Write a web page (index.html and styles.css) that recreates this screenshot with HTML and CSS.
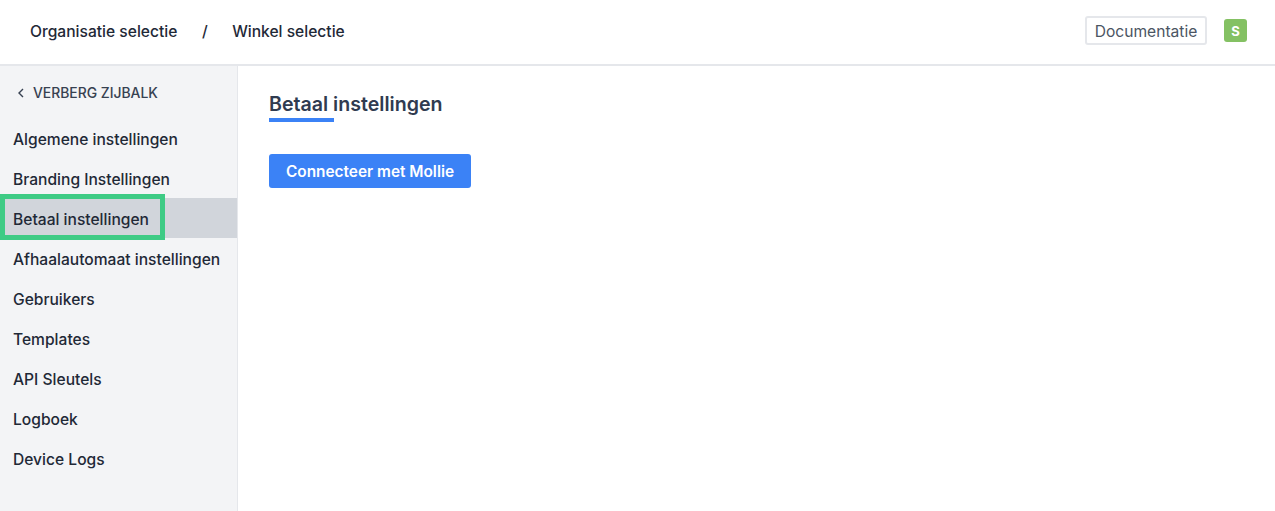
FILE: index.html
```html
<!DOCTYPE html>
<html lang="nl">
<head>
    <meta charset="UTF-8">
    <title>Betaal instellingen</title>
    <link rel="stylesheet" href="styles.css">
</head>
<body>
    <header class="topbar">
        <nav class="crumbs">
            <span>Organisatie selectie</span>
            <span class="crumb-sep">/</span>
            <span>Winkel selectie</span>
        </nav>
        <div class="top-actions">
            <button class="doc-btn">Documentatie</button>
            <span class="avatar">S</span>
        </div>
    </header>
    <div class="main">
        <aside class="sidebar">
            <div class="hide-sidebar">
                <svg width="8" height="10" viewBox="0 0 8 10" fill="none" stroke="#374151" stroke-width="1.4"><path d="M6 1 2 5l4 4"/></svg>
                <span>VERBERG ZIJBALK</span>
            </div>
            <ul class="menu">
                <li>Algemene instellingen</li>
                <li>Branding Instellingen</li>
                <li class="active">Betaal instellingen<span class="highlight"></span></li>
                <li>Afhaalautomaat instellingen</li>
                <li>Gebruikers</li>
                <li>Templates</li>
                <li>API Sleutels</li>
                <li>Logboek</li>
                <li>Device Logs</li>
            </ul>
        </aside>
        <main class="content">
            <h1 class="page-title">Betaal instellingen</h1>
            <button class="connect-btn">Connecteer met Mollie</button>
        </main>
    </div>
</body>
</html>
```

FILE: styles.css
```css
* {
    box-sizing: border-box;
}
html, body {
    height: 100%;
}
body {
    margin: 0;
    font-family: Inter, "Liberation Sans", sans-serif;
    background-color: #fff;
    color: #1f2937;
    display: flex;
    flex-direction: column;
    overflow: hidden;
}
.topbar {
    height: 66px;
    flex: none;
    display: flex;
    align-items: center;
    justify-content: space-between;
    padding: 0 28px 3px 30px;
    border-bottom: 2px solid #e5e7eb;
}
.crumbs {
    display: flex;
    gap: 24.5px;
    padding-top: 1px;
    font-size: 15.6px;
    font-weight: 500;
}
.top-actions {
    display: flex;
    align-items: center;
    gap: 17px;
}
.doc-btn {
    height: 29px;
    width: 122px;
    padding: 1px 0 0;
    background: #fff;
    border: 2px solid #e5e7eb;
    border-radius: 3px;
    font-family: inherit;
    font-size: 15.6px;
    color: #4b5563;
}
.avatar {
    width: 23px;
    height: 23px;
    border-radius: 3px;
    background-color: #84c163;
    color: #fff;
    font-size: 13px;
    font-weight: 700;
    display: flex;
    align-items: center;
    justify-content: center;
}
.main {
    flex: 1;
    display: flex;
}
.sidebar {
    width: 238px;
    flex: none;
    background-color: #f3f4f6;
    border-right: 1px solid #e5e7eb;
}
.hide-sidebar {
    height: 52px;
    padding: 1px 0 0 17px;
    display: flex;
    align-items: center;
    gap: 8px;
    font-size: 13.9px;
    font-weight: 500;
    color: #374151;
}
.menu {
    list-style: none;
    margin: 0;
    padding: 0;
}
.menu li {
    position: relative;
    height: 40px;
    padding: 2px 0 0 13px;
    line-height: 40px;
    font-size: 15.6px;
    font-weight: 500;
    color: #1f2937;
}
.menu li.active {
    background-color: #d1d5db;
}
.highlight {
    position: absolute;
    left: 0;
    top: -4px;
    width: 165px;
    height: 46px;
    border: 5px solid #3ecb85;
}
.content {
    flex: 1;
    padding: 25px 31px;
}
.page-title {
    display: inline-block;
    margin: 0;
    font-size: 19.6px;
    font-weight: 600;
    line-height: 26px;
    color: #303b50;
}
.page-title::after {
    content: "";
    display: block;
    width: 65px;
    height: 4px;
    margin-top: 1px;
    background-color: #3b82f6;
}
.connect-btn {
    display: block;
    width: 202px;
    height: 34px;
    margin-top: 32px;
    padding: 0;
    border: none;
    border-radius: 3px;
    background-color: #3b82f6;
    color: #fff;
    font-family: inherit;
    font-size: 15.4px;
    font-weight: 600;
}
```
